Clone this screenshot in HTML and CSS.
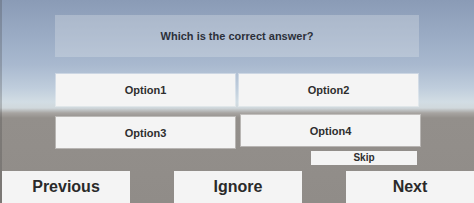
FILE: index.html
```html
<!DOCTYPE html>
<html>
<head>
    <title>Quiz</title>
    <meta charset="UTF-8">
    <link rel="stylesheet" href="styles.css">
</head>
<body>
    <div class="screen">
        <div class="question">Which is the correct answer?</div>

        <div class="options">
            <div class="option-row">
                <button class="option">Option1</button>
                <button class="option">Option2</button>
            </div>
            <div class="option-row second">
                <button class="option low">Option3</button>
                <button class="option shifted">Option4</button>
            </div>
        </div>

        <div class="skip-row">
            <button class="skip-btn">Skip</button>
        </div>

        <div class="nav">
            <button class="nav-btn">Previous</button>
            <button class="nav-btn">Ignore</button>
            <button class="nav-btn">Next</button>
        </div>
    </div>
</body>
</html>
```

FILE: styles.css
```css
body {
    font-family: "Liberation Sans", Arial, sans-serif;
    margin: 0;
    padding: 0;
    overflow: hidden;
}

.screen {
    width: 474px;
    height: 203px;
    display: flex;
    flex-direction: column;
    background: linear-gradient(to bottom,
        #8a9bb6 0px,
        #9aabc4 35px,
        #a9b9cf 65px,
        #bfcddc 88px,
        #d2dde4 102px,
        #d0d8dc 108px,
        #a7a4a1 113px,
        #938f8b 118px,
        #908c88 203px);
    box-shadow: inset 2px 0 0 rgba(60, 60, 60, 0.25);
}

.screen > * {
    flex-shrink: 0;
}

.question {
    margin: 15px 0 0 55px;
    width: 364px;
    height: 42px;
    background: rgba(220, 225, 232, 0.35);
    display: flex;
    align-items: center;
    justify-content: center;
    font-size: 11px;
    font-weight: bold;
    color: #2c303a;
}

button {
    font-family: inherit;
    font-weight: bold;
    color: #2e2e2e;
    background-color: #f4f4f4;
    border: none;
    padding: 0;
    margin: 0;
    cursor: pointer;
}

.options {
    margin: 17px 0 0 56px;
    display: flex;
    flex-direction: column;
    gap: 9px;
}

.option-row {
    display: flex;
    align-items: flex-start;
    gap: 4px;
}

.option {
    width: 179px;
    height: 32px;
    font-size: 11px;
    box-shadow: 0 0 0 1px rgba(255, 255, 255, 0.35);
}

.option.low {
    height: 31px;
    margin-top: 2px;
}

.option.shifted {
    height: 31px;
    margin-left: 2px;
}

.skip-row {
    margin: 3px 0 0 311px;
    height: 14px;
}

.skip-btn {
    display: block;
    width: 106px;
    height: 14px;
    font-size: 10px;
    line-height: 14px;
}

.nav {
    margin-top: 6px;
    padding-left: 2px;
    display: flex;
    justify-content: space-between;
}

.nav-btn {
    width: 128px;
    height: 32px;
    font-size: 16px;
    color: #2a2a2a;
}
```
